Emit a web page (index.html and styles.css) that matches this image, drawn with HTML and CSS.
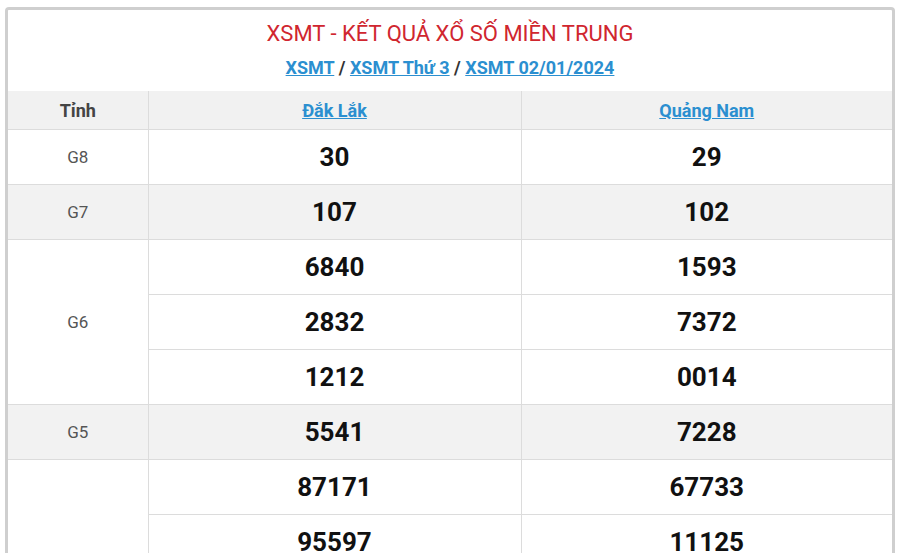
FILE: index.html
```html
<!DOCTYPE html>
<html lang="vi">
<head>
<meta charset="utf-8">
<title>XSMT</title>
<link rel="stylesheet" href="styles.css">
</head>
<body>
<div class="page">
  <div class="card">
    <div class="head">
      <h2 class="title">XSMT - KẾT QUẢ XỔ SỐ MIỀN TRUNG</h2>
      <div class="crumbs"><a href="#">XSMT</a> / <a href="#">XSMT Thứ 3</a> / <a href="#">XSMT 02/01/2024</a></div>
    </div>
    <table class="kq">
      <colgroup><col class="c1"><col class="c2"><col class="c3"></colgroup>
      <thead>
        <tr class="hdr"><th>Tỉnh</th><th><a href="#">Đắk Lắk</a></th><th><a href="#">Quảng Nam</a></th></tr>
      </thead>
      <tbody>
        <tr><td class="g">G8</td><td class="n">30</td><td class="n">29</td></tr>
        <tr class="alt"><td class="g">G7</td><td class="n">107</td><td class="n">102</td></tr>
        <tr><td class="g" rowspan="3">G6</td><td class="n">6840</td><td class="n">1593</td></tr>
        <tr><td class="n">2832</td><td class="n">7372</td></tr>
        <tr><td class="n">1212</td><td class="n">0014</td></tr>
        <tr class="alt"><td class="g">G5</td><td class="n">5541</td><td class="n">7228</td></tr>
        <tr><td class="g" rowspan="7">G4</td><td class="n">87171</td><td class="n">67733</td></tr>
        <tr><td class="n">95597</td><td class="n">11125</td></tr>
        <tr><td class="n"></td><td class="n"></td></tr>
        <tr><td class="n"></td><td class="n"></td></tr>
        <tr><td class="n"></td><td class="n"></td></tr>
        <tr><td class="n"></td><td class="n"></td></tr>
        <tr><td class="n"></td><td class="n"></td></tr>
      </tbody>
    </table>
  </div>
</div>
</body>
</html>
```
FILE: styles.css
```css
html, body {
  margin: 0;
  padding: 0;
  background: #fff;
}
body {
  font-family: Roboto, "Liberation Sans", Arial, sans-serif;
}
.page {
  padding: 7px 5px 0 5px;
  height: 557px;
  box-sizing: border-box;
}
.card {
  height: 546px;
  overflow: hidden;
  border: 3px solid #cfcfcf;
  border-bottom: none;
  border-radius: 4px 4px 0 0;
  box-sizing: border-box;
}
.head {
  height: 81px;
  text-align: center;
  box-sizing: border-box;
  padding-top: 11px;
}
.title {
  margin: 0;
  font-size: 22px;
  font-weight: 400;
  line-height: 26px;
  color: #d0262f;
}
.crumbs {
  margin-top: 10px;
  font-size: 18px;
  font-weight: 700;
  line-height: 22px;
  color: #333;
}
.crumbs a, .hdr a {
  color: #2b8fd0;
  text-decoration: underline;
}
.kq {
  width: 100%;
  border-collapse: collapse;
  table-layout: fixed;
  border-style: hidden;
}
.c1 { width: 140px; }
.c3 { width: 371px; }
.kq th, .kq td {
  border: 1px solid #dcdcdc;
  text-align: center;
  vertical-align: middle;
  padding: 0;
}
.hdr th {
  height: 38px;
  background: #f1f1f1;
  font-size: 18px;
  font-weight: 700;
  color: #444;
}
.kq td {
  height: 54px;
}
.alt td {
  background: #f2f2f2;
}
.g {
  font-size: 17px;
  color: #555;
}
.n {
  font-size: 26px;
  font-weight: 700;
  color: #111;
}
```
